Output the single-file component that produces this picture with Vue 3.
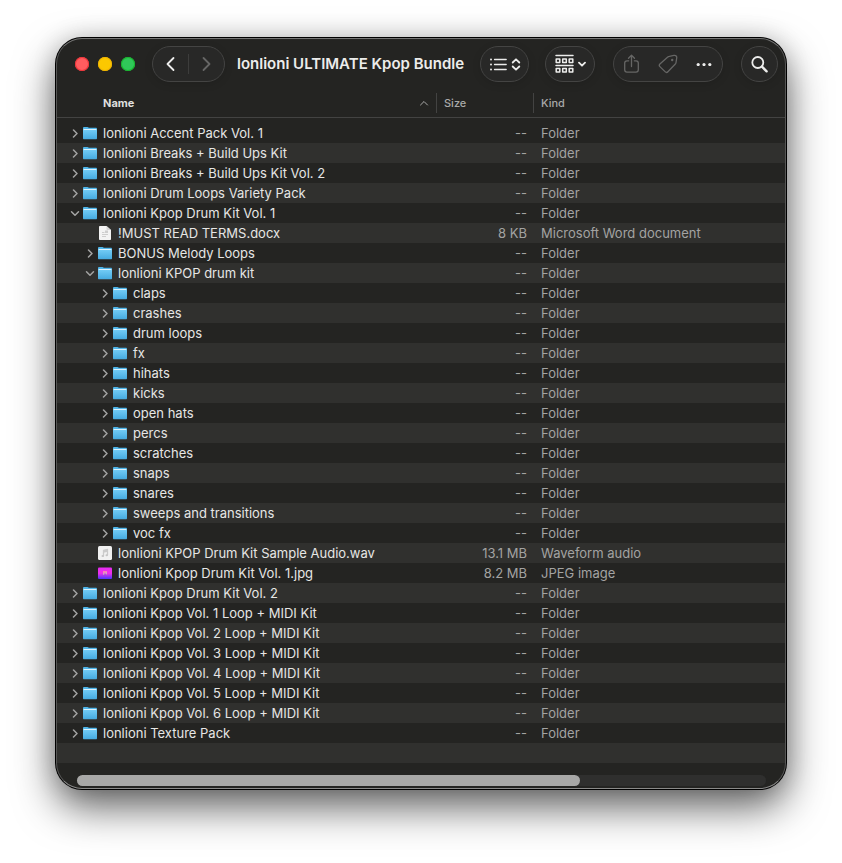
<script setup>
import { ref } from 'vue'

const folder = (name, level = 0, open = false) => ({ name, level, open, icon: 'folder', size: '--', kind: 'Folder' })

const rows = [
  folder('lonlioni Accent Pack Vol. 1'),
  folder('lonlioni Breaks + Build Ups Kit'),
  folder('lonlioni Breaks + Build Ups Kit Vol. 2'),
  folder('lonlioni Drum Loops Variety Pack'),
  folder('lonlioni Kpop Drum Kit Vol. 1', 0, true),
  { name: '!MUST READ TERMS.docx', level: 1, icon: 'doc', size: '8 KB', kind: 'Microsoft Word document' },
  folder('BONUS Melody Loops', 1),
  folder('lonlioni KPOP drum kit', 1, true),
  ...['claps', 'crashes', 'drum loops', 'fx', 'hihats', 'kicks', 'open hats', 'percs', 'scratches', 'snaps', 'snares', 'sweeps and transitions', 'voc fx'].map((n) => folder(n, 2)),
  { name: 'lonlioni KPOP Drum Kit Sample Audio.wav', level: 1, icon: 'audio', size: '13.1 MB', kind: 'Waveform audio' },
  { name: 'lonlioni Kpop Drum Kit Vol. 1.jpg', level: 1, icon: 'image', size: '8.2 MB', kind: 'JPEG image' },
  folder('lonlioni Kpop Drum Kit Vol. 2'),
  ...[1, 2, 3, 4, 5, 6].map((n) => folder(`lonlioni Kpop Vol. ${n} Loop + MIDI Kit`)),
  folder('lonlioni Texture Pack'),
]

const thumb = ref(73)
</script>

<template>
  <main class="desktop">
    <section class="window">
      <svg class="defs" width="0" height="0" aria-hidden="true">
        <defs>
          <linearGradient id="folder-front" x1="0" y1="0" x2="0" y2="1">
            <stop offset="0" stop-color="#74cdf6" />
            <stop offset="1" stop-color="#46abe0" />
          </linearGradient>
          <linearGradient id="photo" x1="0" y1="0" x2="0" y2="1">
            <stop offset="0" stop-color="#e62bf2" />
            <stop offset="0.5" stop-color="#f02fe8" />
            <stop offset="1" stop-color="#4a35ff" />
          </linearGradient>
        </defs>
      </svg>

      <header class="toolbar">
        <div class="lights">
          <button class="light close" aria-label="Close"></button>
          <button class="light minimize" aria-label="Minimize"></button>
          <button class="light expand" aria-label="Zoom"></button>
        </div>

        <nav class="pill nav">
          <button class="tool" aria-label="Back">
            <svg width="10" height="16" viewBox="0 0 10 16"><path d="M7.500 2 1.500 8l6 6" class="bold" /></svg>
          </button>
          <span class="divider"></span>
          <button class="tool dim" aria-label="Forward">
            <svg width="10" height="16" viewBox="0 0 10 16"><path d="m1.500 2 6 6-6 6" class="bold" /></svg>
          </button>
        </nav>

        <h1 class="title">lonlioni ULTIMATE Kpop Bundle</h1>

        <button class="pill view" aria-label="View as list">
          <svg width="18" height="14" viewBox="0 0 18 14">
            <path d="M5.500 2.500H17.200M5.500 7.500H17.200M5.500 12.500H17.200" />
            <g class="solid"><circle cx="2" cy="2.500" r="1" /><circle cx="2" cy="7.500" r="1" /><circle cx="2" cy="12.500" r="1" /></g>
          </svg>
          <svg width="10" height="14" viewBox="0 0 10 14"><path d="m1.700 5.500 3.300-3.200 3.300 3.200M1.700 9.500 5 12.700l3.300-3.200" class="bold" /></svg>
        </button>

        <button class="pill group" aria-label="Group items">
          <svg width="19" height="20" viewBox="0 0 19 20">
            <path d="M1 1.500h17M1 11.500h17" class="medium" />
            <path d="M1.200 4.900h3.600v3.600H1.200zM7.700 4.900h3.600v3.600H7.700zM14.200 4.900h3.600v3.600h-3.600zM1.200 14.500h3.600v3.600H1.200zM7.700 14.500h3.600v3.600H7.700zM14.200 14.500h3.600v3.600h-3.600z" class="medium" />
          </svg>
          <svg width="8" height="6" viewBox="0 0 8 6"><path d="m1 1.700 3 3 3-3" class="bold" /></svg>
        </button>

        <div class="pill actions">
          <button class="tool dim" aria-label="Share">
            <svg width="16" height="20" viewBox="0 0 16 20"><path d="M4.700 6.800H3a2.300 2.300 0 0 0-2.300 2.300v6.700A2.300 2.300 0 0 0 3 18.100h9a2.300 2.300 0 0 0 2.300-2.300V9.100A2.300 2.300 0 0 0 12 6.800h-1.700M7.500 12.500V1.200M4.500 4.200l3-3 3 3" /></svg>
          </button>
          <button class="tool dim" aria-label="Edit tags">
            <svg width="20" height="20" viewBox="0 0 20 20"><path d="M11.300 2.300 16 1.400c1.900-.3 3 .8 2.700 2.600L18 8.600c-.1.700-.4 1.200-.9 1.700l-7.200 7.500c-.8.900-1.800.9-2.600.1L1.900 12.600c-.8-.8-.8-1.800 0-2.600l7.600-6.800c.6-.5 1.100-.8 1.800-.9z" /><circle class="solid" cx="14.200" cy="6" r="1.200" /></svg>
          </button>
          <button class="tool" aria-label="More">
            <svg width="16" height="4" viewBox="0 0 16 4"><g class="solid"><circle cx="2.200" cy="2.500" r="1.600" /><circle cx="8" cy="2.500" r="1.600" /><circle cx="13.800" cy="2.500" r="1.600" /></g></svg>
          </button>
        </div>

        <button class="pill search" aria-label="Search">
          <svg width="18" height="18" viewBox="0 0 18 18"><circle cx="6.800" cy="7.500" r="5.500" class="bold" /><path d="m11 11.700 4.600 4.600" class="heavy" /></svg>
        </button>
      </header>

      <table class="files">
        <colgroup><col class="c-name" /><col class="c-size" /><col class="c-kind" /></colgroup>
        <thead>
          <tr>
            <th class="sorted" scope="col">
              <div class="head">
                <span>Name</span>
                <svg width="10" height="6" viewBox="0 0 10 6"><path d="M1.500 5 5 1.500 8.500 5" class="thin" /></svg>
              </div>
            </th>
            <th scope="col"><div class="head">Size</div></th>
            <th scope="col"><div class="head">Kind</div></th>
          </tr>
        </thead>
        <tbody>
          <tr v-for="row in rows" :key="row.name">
            <td>
              <div class="name" :style="{ '--level': row.level }">
                <button v-if="row.icon === 'folder'" class="fold" :aria-expanded="row.open" :aria-label="row.name">
                  <svg v-if="row.open" width="10" height="8" viewBox="0 0 10 8"><path d="M1.500 2.800 5 6.300l3.500-3.500" class="medium" /></svg>
                  <svg v-else width="8" height="10" viewBox="0 0 8 10"><path d="M2.500 2 6 5.500 2.500 9" class="medium" /></svg>
                </button>
                <span v-else class="fold"></span>

                <svg v-if="row.icon === 'folder'" class="icon" width="14" height="14" viewBox="0 0 14 14">
                  <path class="back" d="M0 2.200C0 1.400.5 1 1.200 1h3.200c.5 0 .8.200 1.100.5l.4.300h6.900c.7 0 1.200.4 1.200 1.200V6H0z" />
                  <path class="front" d="M0 3.500h14v8.700c0 .6-.4 1-1 1H1c-.6 0-1-.4-1-1z" />
                  <rect class="edge" x=".5" y="3" width="13" height="1" rx=".5" />
                </svg>
                <svg v-else-if="row.icon === 'doc'" class="icon" width="14" height="14" viewBox="0 0 14 14">
                  <path fill="#f3f3f3" d="M2.200 0h6.300L13 4v9c0 .6-.4 1-1 1H2.200c-.7 0-1.200-.4-1.200-1V1c0-.6.500-1 1.200-1z" />
                  <path fill="#d6d6d6" d="M8.500 0 13 4H9.300a.8.800 0 0 1-.8-.8z" />
                  <path fill="#cecece" d="M4 6h2.500v1H4zM7 4.500h3v2.500H7zM4 8h6v1H4zM4 10h4v1H4z" />
                </svg>
                <svg v-else-if="row.icon === 'audio'" class="icon" width="14" height="14" viewBox="0 0 14 14">
                  <rect width="14" height="14" rx="1.500" fill="#f1f1f1" />
                  <path fill="none" stroke="#cbcbcb" d="M5.500 10V4.500L9.500 3.500V9M5.500 6l4-1" />
                  <g fill="#c4c4c4"><ellipse cx="4.700" cy="10" rx="1.200" ry="1" /><ellipse cx="8.700" cy="9.200" rx="1.200" ry="1" /></g>
                </svg>
                <svg v-else class="icon" width="14" height="14" viewBox="0 0 14 14">
                  <rect y="1.500" width="14" height="11.500" rx="1" fill="url(#photo)" />
                  <path fill="#ff7fb4" d="M5 5h4v2H5z" />
                  <path fill="#d6a0c8" d="M5 6.500h1.500V9H5zM7.500 6H9v2.500H7.500z" />
                  <path fill="#7f5ad0" d="M5.500 8.500h3v1h-3z" />
                </svg>
                <span class="label">{{ row.name }}</span>
              </div>
            </td>
            <td class="size">{{ row.size }}</td>
            <td class="kind">{{ row.kind }}</td>
          </tr>
          <tr class="empty"><td colspan="3"></td></tr>
        </tbody>
      </table>

      <footer class="scroll">
        <div class="track"><div class="thumb" :style="{ width: thumb + '%' }"></div></div>
      </footer>
    </section>
  </main>
</template>

<style>
body {
  margin: 0;
  background: #fff;
}
</style>

<style scoped>
.desktop {
  padding: 38px 56px 74px;
  overflow: hidden;
  font-family: Inter, "Liberation Sans", sans-serif;
  font-size: 13px;
  color: #e6e6e5;
}
.window {
  background: #242422;
  border: 1px solid #565655;
  border-top-color: #747473;
  border-bottom-color: #8a8a89;
  border-radius: 26px;
  overflow: hidden;
  box-shadow: 0 0 0 1px #000, 0 18px 42px rgba(0, 0, 0, 0.62), 0 0 24px rgba(0, 0, 0, 0.16);
}
.defs {
  display: block;
}
button {
  margin: 0;
  padding: 0;
  border: 0;
  background: none;
  color: inherit;
  font: inherit;
}
svg {
  flex: none;
  fill: none;
  stroke: currentColor;
  stroke-width: 1.3;
  stroke-linecap: round;
  stroke-linejoin: round;
}
.medium { stroke-width: 1.5; }
.bold { stroke-width: 1.8; }
.heavy { stroke-width: 2.4; }
.thin { stroke-width: 1; }
.solid { fill: currentColor; stroke: none; }

.toolbar {
  display: flex;
  align-items: center;
  height: 50px;
  padding: 0 7px 0 18px;
}
.lights {
  display: flex;
  gap: 9px;
  margin-right: 17px;
}
.light {
  width: 14px;
  height: 14px;
  border-radius: 50%;
}
.close { background: #ff5c5f; box-shadow: inset 0 0 0 1px #ee3439; }
.minimize { background: #fcc800; box-shadow: inset 0 0 0 1px #f0b400; }
.expand { background: #30c759; box-shadow: inset 0 0 0 1px #18b52d; }
.pill {
  box-sizing: border-box;
  display: flex;
  align-items: center;
  justify-content: center;
  height: 36px;
  flex: none;
  border: 1px solid #444443;
  border-radius: 18px;
  background: #282827;
  box-shadow: 0 2px 8px rgba(0, 0, 0, 0.12);
  color: #ececeb;
}
.tool {
  display: flex;
  align-items: center;
  justify-content: center;
  height: 34px;
  flex: 1;
}
.dim { color: #666665; }
.nav { width: 73px; }
.divider {
  width: 1px;
  height: 20px;
  background: #3d3d3c;
}
.title {
  flex: 1;
  min-width: 0;
  margin: 0 12px;
  overflow: hidden;
  white-space: nowrap;
  font-size: 15px;
  font-weight: 600;
  line-height: 20px;
  color: #ececeb;
}
.view { width: 49px; gap: 4px; margin-right: 16px; }
.group { width: 50px; gap: 4px; margin-right: 18px; }
.actions { width: 110px; margin-right: 18px; }
.search { width: 37px; }

.files {
  width: 100%;
  table-layout: fixed;
  border-collapse: separate;
  border-spacing: 0;
}
.c-size { width: 97px; }
.c-kind { width: 252px; }
th {
  height: 28px;
  padding: 0;
  border-bottom: 1px solid #434342;
  text-align: left;
  font-size: 11px;
  font-weight: 500;
  color: #a9a9a8;
}
.head {
  display: flex;
  align-items: center;
  justify-content: space-between;
  height: 20px;
  padding-left: 7px;
  border-left: 1px solid #434342;
}
.sorted .head {
  padding: 0 7px 0 46px;
  border-left: 0;
  font-weight: 700;
  color: #dfdfde;
}
.sorted svg { color: #a9a9a8; }
tbody::before {
  content: "";
  display: block;
  height: 5px;
}
td {
  height: 20px;
  padding: 0;
  line-height: 20px;
  white-space: nowrap;
  overflow: hidden;
}
tbody tr:nth-child(even) { background: #30302e; }
.name {
  display: flex;
  align-items: center;
  height: 20px;
  padding-left: calc(11px + var(--level) * 15px);
}
.fold {
  display: flex;
  align-items: center;
  justify-content: center;
  width: 14px;
  height: 20px;
  margin-right: 1px;
  color: #a3a3a2;
}
.icon {
  margin-right: 6px;
  stroke: none;
}
.back { fill: #4fb4e8; }
.edge { fill: #dcf3ff; }
.front { fill: url(#folder-front); }
.size {
  padding-right: 6px;
  text-align: right;
  color: #a3a3a2;
}
.kind {
  padding-left: 8px;
  color: #a3a3a2;
}
.scroll {
  padding: 12px 19px 2px 20px;
}
.track {
  height: 11px;
  border-radius: 6px;
  background: #2f2f2e;
}
.thumb {
  height: 11px;
  border-radius: 6px;
  background: #a8a8a7;
}
</style>
